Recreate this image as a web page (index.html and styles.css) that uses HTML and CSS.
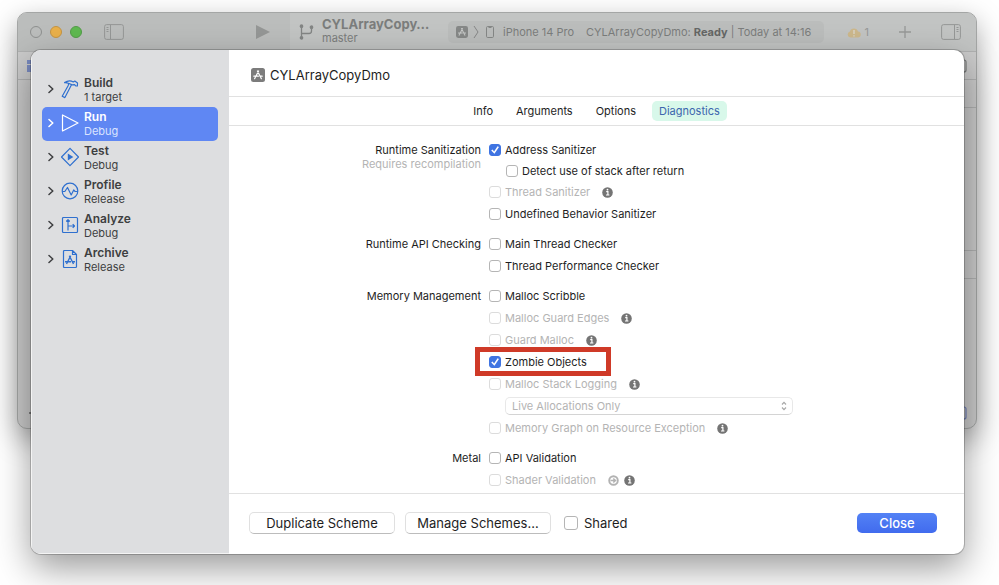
FILE: index.html
```html
<!DOCTYPE html>
<html lang="en">
<head>
<meta charset="utf-8">
<title>Edit Scheme</title>
<link rel="stylesheet" href="styles.css">
</head>
<body>
<svg class="defs" aria-hidden="true">
  <symbol id="app" viewBox="0 0 14 14"><rect width="14" height="14" rx="2.5" fill="currentColor"/><path d="M7.6 3 4.2 9.6M6.4 3l3.4 6.6M2.8 8.2h4.6M9 8.2h2.2M3.6 10.7l.4-.7M10.4 10.7l-.4-.7" fill="none" stroke="var(--mark, #fff)" stroke-width="1.2" stroke-linecap="round"/></symbol>
  <symbol id="info" viewBox="0 0 11 11"><circle cx="5.500" cy="5.500" r="5.300" fill="#747474"/><path d="M4.200 4.600h1.700v3.200M4 8h3.400" fill="none" stroke="#fff" stroke-width="1.200"/><circle cx="5.500" cy="2.700" r=".9" fill="#fff"/></symbol>
  <symbol id="chev" viewBox="0 0 6 10"><path d="M1 1.500 4.800 5 1 8.500" fill="none" stroke="currentColor" stroke-width="1.500" stroke-linecap="round" stroke-linejoin="round"/></symbol>
  <symbol id="panel" viewBox="0 0 20 16"><rect x=".6" y=".6" width="18.800" height="14.800" rx="2" fill="none" stroke="currentColor"/><path d="M6.500 1v14M2.500 3.500h2M2.500 5.500h2M2.500 7.500h2" fill="none" stroke="currentColor"/></symbol>
</svg>

<div class="editor">
  <header class="toolbar">
    <div class="toolbar-nav">
      <div class="lights"><span class="light"></span><span class="light amber"></span><span class="light green"></span></div>
      <svg class="panel-icon"><use href="#panel"/></svg>
      <svg class="play" viewBox="0 0 14 14"><path d="M0 0v14l14-7z" fill="#959796"/></svg>
    </div>
    <div class="toolbar-main">
      <svg class="branch" viewBox="0 0 14 16" fill="none" stroke="#838584" stroke-width="1.300"><circle cx="2" cy="2.200" r="1.200" fill="#838584"/><circle cx="2" cy="13.800" r="1.200" fill="#838584"/><circle cx="12" cy="3.200" r="1.200" fill="#838584"/><path d="M2 2v12M2 9.500h7.500q2.500 0 2.500-2.500V3.500"/></svg>
      <div class="project"><strong>CYLArrayCopy…</strong><span>master</span></div>
      <div class="activity">
        <svg class="activity-app"><use href="#app"/></svg>
        <svg class="activity-sep" viewBox="0 0 6 14"><path d="M1 1l4 6-4 6" fill="none" stroke="#858786"/></svg>
        <svg class="phone" viewBox="0 0 8 12"><rect x=".5" y=".5" width="7" height="11" rx="1.200" fill="none" stroke="#858786"/><path d="M2.500 1.500h3" stroke="#858786"/></svg>
        <span class="device">iPhone 14 Pro</span>
        <span class="status">CYLArrayCopyDmo: <b>Ready</b> | Today at 14:16</span>
      </div>
      <span class="warning"><svg viewBox="0 0 14 11"><path d="M3.500 10.500a3 3 0 0 1-.6-5.900A4.200 4.200 0 0 1 11 4.500a3 3 0 0 1-.5 6z" fill="#cdb88c"/><path d="M7 3v4M7 8.200v1.200" stroke="#dcd8cc" stroke-width="1.300"/></svg>1</span>
      <svg class="plus" viewBox="0 0 12 12"><path d="M6 0v12M0 6h12" stroke="#969897" stroke-width="1.300"/></svg>
      <svg class="panel-icon flipped"><use href="#panel"/></svg>
    </div>
  </header>
  <div class="panes">
    <div class="navigator">
      <div class="strip"><svg class="nav-icon" viewBox="0 0 12 12"><path d="M0 0h12v4H0zM0 5h12v7H0z" fill="#7a8bc0"/></svg></div>
      <svg class="filter-icon" viewBox="0 0 12 2"><path d="M0 1h12" stroke="#666" stroke-width="1.500"/></svg>
    </div>
    <div class="code">
      <div class="strip"><svg class="add-icon" viewBox="0 0 14 14"><rect x="1" y="1" width="12" height="12" rx="2" fill="none" stroke="#757776" stroke-width="1.200"/><path d="M4 7h7" stroke="#757776"/></svg></div>
      <div class="jump-bar"></div>
      <div class="source"></div>
      <div class="debug-bar"></div>
      <div class="console"><svg class="console-icon" viewBox="0 0 14 14"><rect x="1" y="1" width="12" height="12" rx="2" fill="none" stroke="#6d7db5" stroke-width="1.200"/><path d="M7 3h4v8H7z" fill="#6d7db5"/></svg></div>
    </div>
  </div>
</div>

<main class="sheet">
  <nav class="sidebar">
    <ul>
      <li><a href="#build"><svg class="chev"><use href="#chev"/></svg><svg class="phase" viewBox="0 0 18 20"><path d="M10.500 5.700 3.900 18.600 1.200 17.200 7.400 6.200M3.600 3.600Q8.200.6 12.300 3l1.500-1 2.700 2-.1 3-1.700-.2-1.100-1.100-2.400.2-3.700-1.600Q5.800 3.500 3.600 3.600zM7.400 6.200l.2-1.800"/></svg><span class="phase-text"><b>Build</b><span>1 target</span></span></a></li>
      <li><a href="#run" class="selected" aria-current="true"><svg class="chev"><use href="#chev"/></svg><svg class="phase" viewBox="0 0 18 20"><path d="M1.500 2v16L17 10z"/></svg><span class="phase-text"><b>Run</b><span>Debug</span></span></a></li>
      <li><a href="#test"><svg class="chev"><use href="#chev"/></svg><svg class="phase" viewBox="0 0 18 20"><path d="M9 1.300 17.500 10 9 18.700.5 10z"/><path d="M6.800 6.600v6.800l5.500-3.400z" fill="#2f70cf" stroke="none"/></svg><span class="phase-text"><b>Test</b><span>Debug</span></span></a></li>
      <li><a href="#profile"><svg class="chev"><use href="#chev"/></svg><svg class="phase" viewBox="0 0 18 20"><circle cx="9" cy="10" r="7.800"/><path d="M1.200 10.500h2.600L6.500 6.500l3.700 7.400 2.500-5 1.400 1.600h2.700"/></svg><span class="phase-text"><b>Profile</b><span>Release</span></span></a></li>
      <li><a href="#analyze"><svg class="chev"><use href="#chev"/></svg><svg class="phase" viewBox="0 0 18 20"><rect x="1.500" y="2.500" width="15" height="15" rx="1"/><path d="M7 15.500V5M5.200 6.500 7 4.700l1.800 1.800M7 11h6.500M11.700 9.200l1.800 1.800-1.800 1.800"/></svg><span class="phase-text"><b>Analyze</b><span>Debug</span></span></a></li>
      <li><a href="#archive"><svg class="chev"><use href="#chev"/></svg><svg class="phase" viewBox="0 0 18 20"><path d="M3.500 1.500h8l4 4v12q0 1-1 1h-11q-1 0-1-1v-15q0-1 1-1zM11.500 1.500v4h4"/><path d="M9.700 6.700 5.500 15M8.300 6.700 12.500 15M4 12.800h6M11.700 12.800H14" stroke-width="1.400"/></svg><span class="phase-text"><b>Archive</b><span>Release</span></span></a></li>
    </ul>
  </nav>

  <section class="detail">
    <h1 class="scheme"><svg class="scheme-icon"><use href="#app"/></svg>CYLArrayCopyDmo</h1>
    <div class="tabs" role="tablist">
      <button role="tab" type="button">Info</button>
      <button role="tab" type="button">Arguments</button>
      <button role="tab" type="button">Options</button>
      <button role="tab" type="button" aria-selected="true" class="active">Diagnostics</button>
    </div>

    <form class="options">
      <div class="group">
        <div class="group-label">Runtime Sanitization<small>Requires recompilation</small></div>
        <div class="group-rows">
          <div class="row"><label><input type="checkbox" checked>Address Sanitizer</label></div>
          <div class="row nested"><label><input type="checkbox">Detect use of stack after return</label></div>
          <div class="row"><label class="off"><input type="checkbox" disabled>Thread Sanitizer</label><svg class="info"><use href="#info"/></svg></div>
          <div class="row"><label><input type="checkbox">Undefined Behavior Sanitizer</label></div>
        </div>
      </div>
      <div class="group">
        <div class="group-label">Runtime API Checking</div>
        <div class="group-rows">
          <div class="row"><label><input type="checkbox">Main Thread Checker</label></div>
          <div class="row"><label><input type="checkbox">Thread Performance Checker</label></div>
        </div>
      </div>
      <div class="group">
        <div class="group-label">Memory Management</div>
        <div class="group-rows">
          <div class="row"><label><input type="checkbox">Malloc Scribble</label></div>
          <div class="row"><label class="off"><input type="checkbox" disabled>Malloc Guard Edges</label><svg class="info"><use href="#info"/></svg></div>
          <div class="row"><label class="off"><input type="checkbox" disabled>Guard Malloc</label><svg class="info"><use href="#info"/></svg></div>
          <div class="row"><label class="marked"><input type="checkbox" checked>Zombie Objects</label></div>
          <div class="row"><label class="off"><input type="checkbox" disabled>Malloc Stack Logging</label><svg class="info"><use href="#info"/></svg></div>
          <div class="row select-row">
            <select disabled aria-label="Malloc stack logging mode"><option>Live Allocations Only</option></select>
            <svg class="updown" viewBox="0 0 6 10"><path d="M1 3.500 3 1.300l2 2.200M1 6.500l2 2.200 2-2.200" fill="none" stroke="#a8a8a8" stroke-width="1.200"/></svg>
          </div>
          <div class="row"><label class="off"><input type="checkbox" disabled>Memory Graph on Resource Exception</label><svg class="info"><use href="#info"/></svg></div>
        </div>
      </div>
      <div class="group">
        <div class="group-label">Metal</div>
        <div class="group-rows">
          <div class="row"><label><input type="checkbox">API Validation</label></div>
          <div class="row"><label class="off"><input type="checkbox" disabled>Shader Validation</label><svg class="info arrow" viewBox="0 0 11 11"><circle cx="5.500" cy="5.500" r="4.300" fill="none" stroke="#b2b2b2" stroke-width="1.900"/><path d="M2.500 5.500h4.700M5.300 3.500l2.200 2-2.200 2" fill="none" stroke="#b2b2b2" stroke-width="1.500"/></svg><svg class="info tight"><use href="#info"/></svg></div>
        </div>
      </div>
    </form>

    <footer class="actions">
      <button type="button" class="push">Duplicate Scheme</button>
      <button type="button" class="push">Manage Schemes…</button>
      <label class="shared"><input type="checkbox">Shared</label>
      <button type="button" class="primary">Close</button>
    </footer>
  </section>
</main>
</body>
</html>
```
FILE: styles.css
```css
* { box-sizing: border-box; }

body {
  margin: 0;
  min-height: 100vh;
  padding: 50px 35px 31px 31px;
  overflow: hidden;
  background: #fff;
  color: #1e1e1e;
  font: 11px/14px Inter, "Liberation Sans", sans-serif;
  position: relative;
}

.defs { position: absolute; width: 0; height: 0; }
svg { flex: none; display: block; }
button, input, select { font: inherit; color: inherit; margin: 0; }

/* Editor window behind the sheet */
.editor {
  position: absolute;
  top: 12px;
  left: 17px;
  right: 22px;
  border-radius: 10px;
  overflow: hidden;
  background: #cbcbcb;
  border: 1px solid #a4a6a5;
  box-shadow: 0 10px 28px rgba(0, 0, 0, .36);
  color: #7b7d7c;
}

.toolbar { display: flex; height: 38px; background: #c2c4c3; }
.toolbar-nav {
  display: flex;
  align-items: center;
  width: 272px;
  flex: none;
  padding: 0 20px 0 12px;
  background: #bbbdbc;
}
.lights { display: flex; gap: 8px; margin-right: 22px; }
.light { width: 12px; height: 12px; border-radius: 50%; border: 1px solid #8e908f; }
.amber { background: #e9b04a; border-color: #c49444; }
.green { background: #5fb950; border-color: #529c48; }
.panel-icon { width: 20px; height: 16px; color: #959796; }
.flipped { transform: scaleX(-1); }
.play { width: 14px; height: 14px; margin-left: auto; }

.toolbar-main { display: flex; align-items: center; flex: 1; padding: 0 15px 0 9px; }
.branch { width: 15px; height: 16px; margin-right: 8px; }
.project { display: flex; flex-direction: column; width: 126px; padding-bottom: 3px; }
.project strong { font-size: 13px; line-height: 15px; }
.project span { line-height: 12px; }
.activity {
  display: flex;
  align-items: center;
  height: 22px;
  width: 376px;
  padding: 0 8px;
  border-radius: 5px;
  background: #bbbdbc;
  white-space: nowrap;
}
.activity-app { width: 12px; height: 12px; margin-right: 5px; color: #868887; --mark: #c6c8c7; }
.activity-sep { width: 6px; height: 14px; margin-right: 7px; }
.phone { width: 8px; height: 12px; margin-right: 9px; }
.device { margin-right: 12px; }
.status b { color: #656766; }
.warning { display: flex; align-items: center; gap: 4px; margin-left: auto; color: #979998; }
.warning svg { width: 14px; height: 11px; }
.plus { width: 12px; height: 12px; margin: 0 30px; }

.panes { display: flex; height: 377px; }
.navigator {
  display: flex;
  flex-direction: column;
  justify-content: space-between;
  width: 272px;
  padding-bottom: 14px;
}
.code { display: flex; flex-direction: column; flex: 1; }
.strip {
  display: flex;
  align-items: center;
  height: 29px;
  padding: 0 9px;
  border: solid #b0b1b1;
  border-width: 1px 0;
}
.code .strip { justify-content: flex-end; }
.nav-icon { width: 12px; height: 12px; }
.add-icon, .console-icon { width: 14px; height: 14px; }
.jump-bar { height: 27px; }
.source { flex: 1; border-top: 1px solid #b0b1b1; }
.debug-bar { height: 29px; border: solid #b0b1b1; border-width: 1px 0; }
.console {
  display: flex;
  justify-content: flex-end;
  align-items: flex-end;
  height: 149px;
  padding: 0 9px 8px;
}
.filter-icon { width: 12px; height: 2px; margin-left: 11px; }

/* Scheme sheet */
.sheet {
  position: relative;
  display: grid;
  grid-template-columns: 198px 1fr;
  border-radius: 10px;
  overflow: hidden;
  background: #fff;
  box-shadow: 0 0 0 1px rgba(0, 0, 0, .2), 0 14px 36px rgba(0, 0, 0, .4);
}

.sidebar {
  padding: 23px 11px 23px 10px;
  background: #dddee0;
  border: solid #f4f4f4;
  border-width: 0 0 1px 1px;
}
.sidebar ul { list-style: none; margin: 0; padding: 0; }
.sidebar a {
  display: flex;
  align-items: center;
  height: 34px;
  padding-left: 6px;
  border-radius: 5px;
  color: #3e3f41;
  text-decoration: none;
}
.chev { width: 6px; height: 10px; margin: 0 7px 2px 0; }
.phase {
  width: 18px;
  height: 20px;
  margin: 0 5px 2px 0;
  fill: none;
  stroke: #2f70cf;
  stroke-width: 1.2;
  stroke-linejoin: round;
}
.phase-text { display: flex; flex-direction: column; }
.phase-text b { font-size: 12px; font-weight: 600; }
.sidebar a.selected { background: #5f87f3; color: #fff; }
.selected .phase { stroke: #fff; }
.selected .phase-text span { color: #dbe4ff; }

.detail { display: flex; flex-direction: column; min-width: 0; }
.scheme {
  display: flex;
  align-items: center;
  gap: 5px;
  height: 47px;
  margin: 0;
  padding: 4px 22px 0;
  border-bottom: 1px solid #e1e1e1;
  font-size: 13px;
  font-weight: 400;
}
.scheme-icon { width: 14px; height: 14px; color: #7c7c7c; }

.tabs {
  display: flex;
  justify-content: center;
  align-items: center;
  gap: 9px;
  height: 29px;
  border-bottom: 1px solid #e1e1e1;
}
.tabs button { height: 20px; padding: 0 7px; border: 0; border-radius: 5px; background: none; }
.tabs .active { background: #d8f8ea; color: #3c66ae; }

.options { padding: 13px 0 2px; }
.group { display: grid; grid-template-columns: 252px 1fr; column-gap: 8px; margin-bottom: 8px; }
.group:last-child { margin-bottom: 0; }
.group-label { padding-top: 4px; text-align: right; }
.group-label small { display: block; font-size: 11px; color: #b4b4b4; }
.row { display: flex; align-items: center; height: 22px; }
.nested { height: 20px; padding-left: 17px; }
.row label { display: flex; align-items: center; gap: 4px; }
.off { color: #b4b4b4; }

input[type="checkbox"] {
  appearance: none;
  display: grid;
  place-items: center;
  width: 12px;
  height: 12px;
  border: 1px solid #b5b5b5;
  border-radius: 3px;
  background: #fff;
}
input[type="checkbox"]:disabled { border-color: #dcdcdc; }
input[type="checkbox"]:checked { background: #3f74e2; border-color: #3f74e2; }
input[type="checkbox"]:checked::after {
  content: "";
  width: 9px;
  height: 8px;
  background: #fff;
  clip-path: polygon(8% 55%, 22% 43%, 40% 68%, 78% 4%, 94% 14%, 44% 98%);
}

.info { width: 11px; height: 11px; margin-left: 12px; }
.tight { margin-left: 5px; }

.marked { position: relative; }
.marked::before {
  content: "";
  position: absolute;
  inset: -8px -24px -7px -14px;
  border: 5px solid #cf3a28;
}

.select-row { padding-left: 16px; }
select {
  appearance: none;
  width: 288px;
  height: 18px;
  padding: 0 6px;
  border: 1px solid #e8e8e8;
  border-bottom-color: #d4d4d4;
  border-radius: 5px;
  background: #fff;
}
select:disabled { color: #b4b4b4; opacity: 1; }
.updown { width: 6px; height: 10px; margin-left: -12px; }

.actions {
  display: flex;
  align-items: center;
  gap: 10px;
  height: 61px;
  padding: 0 27px 2px 20px;
  border-top: 1px solid #e1e1e1;
  font-size: 13px;
}
.push, .primary { height: 22px; padding: 0; border-radius: 5px; }
.push {
  width: 146px;
  background: #fff;
  border: 1px solid #e0e0e0;
  border-bottom-color: #bcbcbc;
}
.shared { display: flex; align-items: center; gap: 6px; margin-left: 3px; }
.actions input[type="checkbox"] { width: 14px; height: 14px; }
.primary {
  width: 80px;
  height: 20px;
  margin-left: auto;
  border: 0;
  background: linear-gradient(#5382f5, #416bee);
  color: #fff;
  font-weight: 500;
}
```
